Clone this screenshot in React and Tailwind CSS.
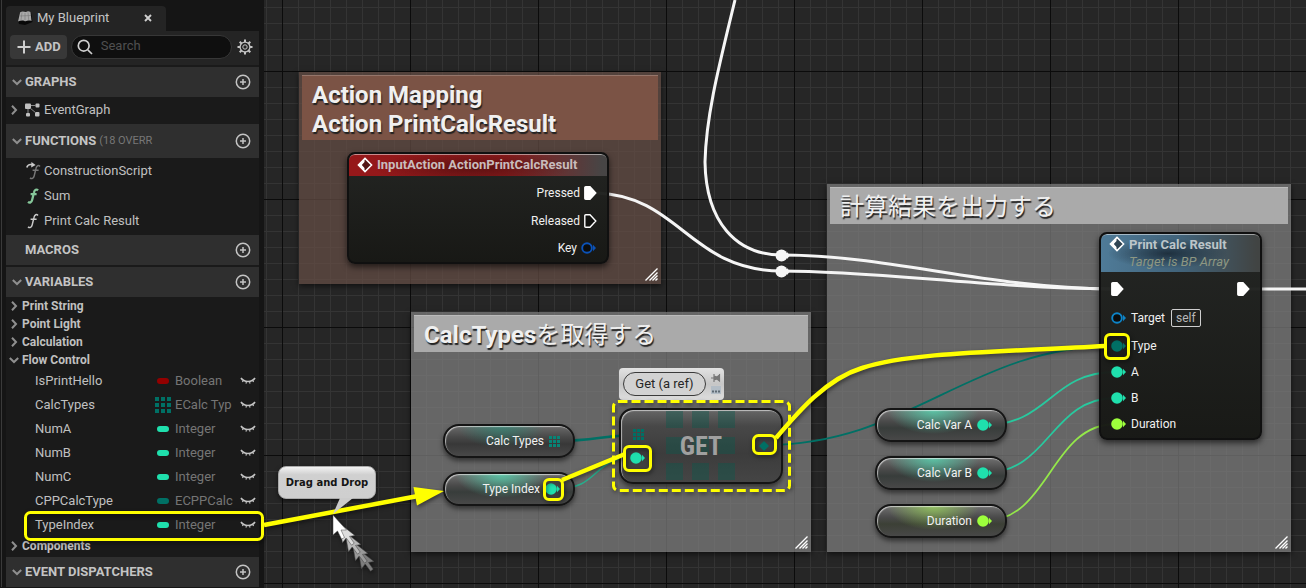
import React from "react";

const teal = "#007065";
const mint = "#1fe0ad";
const lime = "#9dff3c";

function Chevron({ open }) {
  return (
    <svg width="10" height="10" viewBox="0 0 10 10" fill="none" stroke="#8f8f8f" strokeWidth="2" aria-hidden="true">
      <path d={open ? "M0.8 3 L5 7 L9.2 3" : "M3 0.8 L7 5 L3 9.2"} />
    </svg>
  );
}

function PlusCircle() {
  return (
    <svg width="16" height="16" viewBox="0 0 16 16" fill="none" stroke="#c4c4c4" strokeWidth="1.5" aria-hidden="true">
      <circle cx="8" cy="8" r="6.7" />
      <path d="M8 5 V11 M5 8 H11" />
    </svg>
  );
}

function Section({ title, note, open, tall, noArrow }) {
  return (
    <div className={"flex items-center bg-[#2f2f2f] pr-2 pl-[6px] " + (tall ? "h-[34px]" : "h-[30px]")}>
      <button className="flex flex-1 items-center gap-[3px] text-left text-[13px] font-bold text-[#c4c4c4]">
        <span className="w-[10px]">{!noArrow && <Chevron open={open} />}</span>
        <span>{title}</span>
        {note && <span className="text-[11px] font-normal text-[#777]">{note}</span>}
      </button>
      <button aria-label={"Add to " + title}>
        <PlusCircle />
      </button>
    </div>
  );
}

function FIcon({ color, bold, override }) {
  return (
    <svg width="16" height="18" viewBox="0 0 16 18" fill="none" aria-hidden="true">
      <path
        d="M13 3.4 C11.6 1.9 9.6 2.6 9 5.4 L7.2 12.8 C6.6 15.6 4.6 16.1 3 14.8 M5.6 7.2 H11.6"
        transform={override ? "translate(1 1)" : "translate(-1 0)"}
        stroke={color}
        strokeWidth={bold ? 2.3 : 1.5}
      />
      {override && (
        <g>
          <path d="M0.8 5.4 C1.6 2.8 4 2.2 6 2.6" stroke="#c9c9c9" strokeWidth="1.6" />
          <path d="M5.4 0 L9.6 3 L5.2 5.4 Z" fill="#c9c9c9" />
        </g>
      )}
    </svg>
  );
}

function EyeClosed() {
  return (
    <svg width="16" height="8" viewBox="0 0 16 8" fill="none" stroke="#c4c4c4" aria-hidden="true">
      <path d="M1 1 C4 5.6 12 5.6 15 1" strokeWidth="1.6" />
      <path d="M3.4 3.4 L2.4 5 M6.4 4.6 L6 6.6 M9.6 4.6 L10 6.6 M12.6 3.4 L13.6 5" strokeWidth="1.1" />
    </svg>
  );
}

function GridIcon({ size, color }) {
  return (
    <svg width={size} height={size} viewBox="0 0 16 16" fill={color} aria-hidden="true">
      {[0, 6, 12].map((y) => [0, 6, 12].map((x) => <rect key={x + "-" + y} x={x} y={y} width="4" height="4" />))}
    </svg>
  );
}

function DenseGridIcon({ color }) {
  return (
    <svg width="11" height="11" viewBox="0 0 11 11" fill={color} aria-hidden="true">
      {[0, 4, 8].map((y) => [0, 4, 8].map((x) => <rect key={x + "-" + y} x={x} y={y} width="3" height="3" />))}
    </svg>
  );
}

function Category({ name, open }) {
  return (
    <button className="flex h-[18px] w-full items-center gap-[3px] pl-[3px] text-left text-xs font-bold text-[#c0c0c0]">
      <Chevron open={open} />
      {name}
    </button>
  );
}

function Variable({ name, type, color, array }) {
  return (
    <li className="flex h-6 items-center pl-[29px] text-[13px]">
      <span className="w-[120px] text-[#c0c0c0]">{name}</span>
      <span className="flex w-4 justify-center">
        {array ? (
          <GridIcon size={16} color={color} />
        ) : (
          <svg width="12" height="6" aria-hidden="true">
            <rect width="12" height="6" rx="3" fill={color} />
          </svg>
        )}
      </span>
      <span className="ml-1 w-[58px] overflow-hidden whitespace-nowrap text-[#757575]">{type}</span>
      <button className="ml-[7px]" aria-label={"Toggle visibility of " + name}>
        <EyeClosed />
      </button>
    </li>
  );
}

const variables = [
  ["IsPrintHello", "Boolean", "#930000"],
  ["CalcTypes", "ECalc Typ", teal, true],
  ["NumA", "Integer", mint],
  ["NumB", "Integer", mint],
  ["NumC", "Integer", mint],
  ["CPPCalcType", "ECPPCalc", teal],
  ["TypeIndex", "Integer", mint],
];

function Sidebar() {
  return (
    <aside className="w-[264px] shrink-0 bg-[#151515] pr-[5px]">
      <div className="ml-[1px] border-l border-[#3a3a3a] pl-1">
        <div className="flex h-[31px] items-end">
          <div className="flex h-[25px] w-40 items-center rounded-t bg-[#242424] pb-[2px] pl-[11px] text-[13px] text-[#c4c4c4]">
            <svg width="16" height="16" viewBox="0 0 16 16" aria-hidden="true">
              <path d="M1 11 L2.5 3 L14 2 L15.5 12 L8 15 L2 14 Z" fill="#080808" />
              <path d="M3 2.5 C6 0.5 8 2.6 9 2 C11 0.8 12 1.5 13.5 2 L14.5 11 C11 9.6 9 12 7.5 11 C5 10.2 3 10.8 1 11.6 Z" fill="#a9a9a9" />
              <path d="M5 2.5 L4 10 M8 3 V10.5 M11 2.5 L11.7 10 M2.5 6 L14 5.5" stroke="#777" strokeWidth="0.6" />
            </svg>
            <span className="ml-1 flex-1">My Blueprint</span>
            <button className="mr-[14px]" aria-label="Close tab">
              <svg width="8" height="8" viewBox="0 0 8 8" stroke="#cfcfcf" strokeWidth="1.9" aria-hidden="true">
                <path d="M1 1 L7 7 M7 1 L1 7" />
              </svg>
            </button>
          </div>
        </div>
        <div className="flex h-[34px] items-center bg-[#242424] pr-[6px] pb-[2px] pl-1">
          <button className="flex h-6 w-[57px] items-center gap-1 rounded bg-[#383838] pl-[7px] text-[13px] font-bold text-[#c4c4c4]">
            <svg width="14" height="14" viewBox="0 0 14 14" stroke="#cfcfcf" strokeWidth="2" aria-hidden="true">
              <path d="M7 0.5 V13.5 M0.5 7 H13.5" />
            </svg>
            ADD
          </button>
          <label className="ml-1 flex h-6 w-[162px] items-center rounded-full border border-[#373737] bg-[#0f0f0f] pl-[5px]">
            <svg width="16" height="16" viewBox="0 0 16 16" fill="none" stroke="#cfcfcf" strokeWidth="1.7" aria-hidden="true">
              <circle cx="6.7" cy="6.7" r="5.4" />
              <path d="M10.8 10.8 L15 15" />
            </svg>
            <input
              aria-label="Search"
              placeholder="Search"
              className="ml-2 w-[110px] bg-transparent pb-[2px] text-[13px] text-[#c0c0c0] outline-none placeholder:text-[#505050]"
            />
          </label>
          <button className="ml-[5px]" aria-label="Settings">
            <svg width="16" height="16" viewBox="0 0 16 16" fill="none" stroke="#c4c4c4" aria-hidden="true">
              <circle cx="8" cy="8" r="4.9" strokeWidth="1.3" />
              <circle cx="8" cy="8" r="2.2" strokeWidth="1" />
              <path
                d="M8 0.5 V3 M8 13 V15.5 M0.5 8 H3 M13 8 H15.5 M2.7 2.7 L4.5 4.5 M11.5 11.5 L13.3 13.3 M13.3 2.7 L11.5 4.5 M4.5 11.5 L2.7 13.3"
                strokeWidth="2"
              />
            </svg>
          </button>
        </div>
        <div className="flex flex-col gap-[2px] bg-[#1a1a1a] pt-[2px]">
          <div>
            <Section title="GRAPHS" open />
            <button className="flex h-[25px] w-full items-center pl-[3px] text-left text-[13px] text-[#c0c0c0]">
              <Chevron />
              <svg className="mr-1 ml-[6px]" width="15" height="14" viewBox="0 0 15 14" fill="#c0c0c0" aria-hidden="true">
                <rect x="0" y="0.5" width="6" height="5.5" rx="1" />
                <rect x="10.5" y="0.5" width="4" height="4" rx="1" />
                <rect x="1" y="10" width="4" height="3.5" rx="1" />
                <rect x="10" y="9" width="4.5" height="4.5" rx="1" />
                <path d="M6 2.5 H11 M3 6 V10 M5 5 L11 10" stroke="#8a8a8a" />
              </svg>
              EventGraph
            </button>
          </div>
          <div>
            <Section title="FUNCTIONS" note="(18 OVERR" open tall />
            <ul className="text-[13px] text-[#c0c0c0]">
              <li className="flex h-[25px] items-center gap-[2px] pl-5">
                <FIcon color="#777" override />
                ConstructionScript
              </li>
              <li className="flex h-[25px] items-center gap-[2px] pl-5">
                <FIcon color="#86c79a" bold />
                Sum
              </li>
              <li className="flex h-[25px] items-center gap-[2px] pl-5">
                <FIcon color="#c9c9c9" />
                Print Calc Result
              </li>
            </ul>
          </div>
          <Section title="MACROS" noArrow />
          <div>
            <Section title="VARIABLES" open />
            <Category name="Print String" />
            <Category name="Point Light" />
            <Category name="Calculation" />
            <Category name="Flow Control" open />
            <ul>
              {variables.map(([name, type, color, array]) => (
                <Variable key={name} name={name} type={type} color={color} array={array} />
              ))}
            </ul>
            <Category name="Components" />
          </div>
          <Section title="EVENT DISPATCHERS" open />
        </div>
      </div>
    </aside>
  );
}

function ResizeGrip() {
  return (
    <svg className="absolute right-[3px] bottom-[3px]" width="13" height="13" viewBox="0 0 13 13" stroke="#fff" strokeWidth="1.4" aria-hidden="true">
      <path d="M0.5 12.5 L12.5 0.5 M4.5 12.5 L12.5 4.5 M7.5 12.5 L12.5 7.5 M10.5 12.5 L12.5 10.5" />
    </svg>
  );
}

function Comment({ place, tone, headTone, children }) {
  return (
    <section className={"absolute p-[3px] shadow-[0_2px_6px_rgba(0,0,0,0.6)] " + place + " " + tone}>
      <h2
        className={
          "border-t border-white/20 pl-[10px] text-2xl leading-[29px] font-bold text-[#f0f0f0] [text-shadow:1px_2px_1px_#222] " +
          headTone
        }
      >
        {children}
      </h2>
      <ResizeGrip />
    </section>
  );
}

function Pin({ color, hollow }) {
  return (
    <svg width="16" height="12" viewBox="0 0 16 12" aria-hidden="true">
      <circle cx="6" cy="6" r={hollow ? 4.8 : 5.8} fill={hollow ? "#0c0d0d" : color} stroke={color} strokeWidth={hollow ? 1.9 : 0} />
      <path d="M12 2.8 L15 6 L12 9.2 Z" fill={color} />
    </svg>
  );
}

function ExecPin({ hollow }) {
  return (
    <svg width="13" height="14" viewBox="0 0 13 14" aria-hidden="true">
      <path
        d="M1.8 0.8 H6 L11.8 7 L6 13.2 H1.8 Q0.8 13.2 0.8 12.2 V1.8 Q0.8 0.8 1.8 0.8 Z"
        fill={hollow ? "#10110f" : "#fff"}
        stroke="#fff"
        strokeWidth="1.4"
      />
    </svg>
  );
}

function EventDiamond() {
  return (
    <svg width="16" height="16" viewBox="0 0 16 16" aria-hidden="true">
      <path d="M8 1.4 L14.6 8 L8 14.6 L1.4 8 Z" fill="rgba(20,20,20,0.5)" stroke="#fff" strokeWidth="1.5" />
      <path d="M7.5 2 L1.4 8 L7.5 14 V11 L4.8 8 L7.5 5 Z" fill="#fff" />
    </svg>
  );
}

function Pill({ place, glow, label, children }) {
  return (
    <div
      className={
        "absolute flex h-[34px] w-[132px] items-center justify-end gap-[5px] rounded-[16px] border-2 border-[#151515] pr-3 text-xs text-[#f2f2f2] shadow-[0_3px_5px_rgba(0,0,0,0.5),inset_1px_1px_1px_rgba(255,255,255,0.6)] " +
        glow +
        " " +
        place
      }
    >
      <span>{label}</span>
      {children}
    </div>
  );
}

const tealGlow =
  "bg-[radial-gradient(ellipse_44px_22px_at_44%_0%,rgba(30,150,125,0.55),transparent),linear-gradient(#6a6a6a_0%,#474747_38%,#383838_60%,#484848_100%)]";
const mintGlow =
  "bg-[radial-gradient(ellipse_46px_24px_at_44%_0%,rgba(85,225,185,0.75),transparent),linear-gradient(#707070_0%,#4a4a4a_38%,#383d3b_60%,#484848_100%)]";
const limeGlow =
  "bg-[radial-gradient(ellipse_46px_24px_at_44%_0%,rgba(160,225,90,0.7),transparent),linear-gradient(#707070_0%,#4a4a4a_38%,#3c4036_60%,#484848_100%)]";

function Wires() {
  return (
    <svg className="absolute inset-0 h-full w-full" fill="none" aria-hidden="true">
      <g transform="translate(-264 0)">
        <g stroke="#f5f5f5" strokeWidth="3">
          <path d="M735 0 C720 62 706 115 705 162 C706 222 736 255 782 255" />
          <path d="M597 193 C680 196 690 271 782 271" />
          <path d="M782 255 C890 255 985 288 1112 289" />
          <path d="M782 271 C880 271 985 288 1112 289" />
          <path d="M1244 289 H2600" />
        </g>
        <g fill="#f5f5f5">
          <circle cx="781.5" cy="255.5" r="6" />
          <circle cx="781.5" cy="271.5" r="6" />
          <path d="M787 252 L790 255.5 L787 259 Z M787 268 L790 271.5 L787 275 Z" />
        </g>
        <path d="M560 441 C590 441 610 435 636 435" stroke={teal} strokeWidth="2.5" />
        <path d="M555 489 C602 489 590 457 637 457" stroke="#27ad8c" strokeWidth="1.6" />
        <path d="M765 445 C910 445 970 346 1116 346" stroke={teal} strokeWidth="1.8" />
        <path d="M984 425 C1050 425 1050 372 1116 372" stroke="#28c99f" strokeWidth="1.8" />
        <path d="M984 473 C1050 473 1050 398 1116 398" stroke="#28c99f" strokeWidth="1.8" />
        <path d="M984 521 C1050 521 1050 424 1116 424" stroke="#94e84a" strokeWidth="1.8" />
      </g>
    </svg>
  );
}

const nodeFrame =
  "absolute overflow-hidden rounded-lg border-2 border-[#101010] bg-[linear-gradient(rgba(34,36,34,0.97),rgba(22,23,20,0.97))] text-xs text-[#f0f0f0] shadow-[0_3px_6px_rgba(0,0,0,0.6)]";

function InputActionNode() {
  return (
    <article className={nodeFrame + " top-[152px] left-[83px] h-[112px] w-[262px]"}>
      <h3 className="flex h-[22px] items-center gap-1 rounded-t-md border-t border-white/50 bg-[radial-gradient(ellipse_100px_16px_at_48%_60%,rgba(50,10,10,0.55),transparent),linear-gradient(90deg,#96181a_0%,#8c1a1b_60%,#474545_98%)] pb-[1px] pl-2 text-[13px] font-bold text-[#c9bcbc]">
        <EventDiamond />
        InputAction ActionPrintCalcResult
      </h3>
      <div className="flex flex-col pt-[3px] pr-[10px]">
        <div className="flex h-7 items-center justify-end gap-1">
          Pressed <ExecPin />
        </div>
        <div className="flex h-7 items-center justify-end gap-1">
          Released <ExecPin hollow />
        </div>
        <div className="flex h-[26px] items-center justify-end gap-1">
          Key <Pin color="#0b52b8" hollow />
        </div>
      </div>
    </article>
  );
}

function PrintNode() {
  return (
    <article className={nodeFrame + " top-[232px] left-[835px] h-[208px] w-[163px]"}>
      <header className="flex h-[38px] gap-1 rounded-t-md border-t border-white/50 bg-[radial-gradient(ellipse_60px_15px_at_42%_50%,rgba(15,25,35,0.7),transparent),linear-gradient(90deg,#4f7b98_0%,#41637a_50%,#414443_98%)] pt-[1px] pl-2">
        <EventDiamond />
        <div>
          <h3 className="text-[13px] leading-[17px] font-bold text-[#bcc5c9]">Print Calc Result</h3>
          <p className="text-[13px] leading-[17px] text-[#8d9782] italic">Target is BP Array</p>
        </div>
      </header>
      <div className="px-[10px] pt-[3px]">
        <div className="flex h-7 items-center justify-between">
          <ExecPin />
          <ExecPin />
        </div>
        <div className="flex h-[30px] items-center gap-1">
          <Pin color="#0d84c8" hollow /> Target
          <span className="ml-[2px] rounded-xs border border-[#cfcfcf] px-1 leading-4 text-[#b8b8b8]">self</span>
        </div>
        <div className="flex h-[26px] items-center gap-1">
          <Pin color={teal} /> Type
        </div>
        <div className="flex h-[26px] items-center gap-1">
          <Pin color={mint} /> A
        </div>
        <div className="flex h-[26px] items-center gap-1">
          <Pin color={mint} /> B
        </div>
        <div className="flex h-[26px] items-center gap-1">
          <Pin color={lime} /> Duration
        </div>
      </div>
    </article>
  );
}

function GetNode() {
  return (
    <article className="absolute top-[408px] left-[355px] grid h-[76px] w-[164px] grid-cols-[34px_1fr_34px] items-center overflow-hidden rounded-[14px] border-2 border-[#151515] bg-[linear-gradient(#666_0%,#484848_22%,#3c3c3c_60%,#454545_100%)] shadow-[0_3px_5px_rgba(0,0,0,0.5),inset_1px_1px_1px_rgba(255,255,255,0.6)]">
      <div className="flex flex-col items-center gap-3">
        <DenseGridIcon color={teal} />
        <Pin color={mint} />
      </div>
      <div className="grid place-items-center">
        <svg className="col-start-1 row-start-1" width="70" height="70" viewBox="0 0 70 70" fill="rgba(10,90,78,0.4)" aria-hidden="true">
          {[0, 26, 52].map((y) => [0, 26, 52].map((x) => <rect key={x + "-" + y} x={x} y={y} width="17" height="17" />))}
        </svg>
        <h3 className="col-start-1 row-start-1 font-['Roboto_Condensed',Roboto,sans-serif] text-[26px] leading-none font-bold text-[#a0a0a0]">
          GET
        </h3>
      </div>
      <svg className="justify-self-center" width="10" height="10" viewBox="0 0 10 10" fill={teal} aria-hidden="true">
        <path d="M0 5 L5 0 L10 5 L5 10 Z" />
      </svg>
    </article>
  );
}

function GetBubble() {
  return (
    <div className="absolute top-[368px] left-[355px] flex h-8 w-[105px] items-center gap-[5px] rounded-sm bg-[linear-gradient(#e2e2e2,#c6c6c6_50%,#dedede)] pl-1">
      <button className="h-6 w-[83px] rounded-full border border-[#3a3a3a] bg-[#d2d2d2] text-[13px] text-[#262626]">Get (a ref)</button>
      <svg width="10" height="22" viewBox="0 0 10 22" aria-hidden="true">
        <path d="M0 5 H3 M3 1 V9 M8.5 1 V9 M3 3 L6 4 L8.5 2 V8 L6 6 L3 7 Z" stroke="#777" strokeWidth="1.2" fill="#777" />
        <rect x="0" y="13" width="10" height="8" fill="#b3bdc6" />
        <path d="M1 18.5 H9" stroke="#5e6a74" strokeWidth="2" strokeDasharray="2 1" />
      </svg>
    </div>
  );
}

function Canvas() {
  return (
    <main className="relative flex-1 overflow-hidden bg-[#262626] bg-[linear-gradient(90deg,#0b0b0b_1px,transparent_1px),linear-gradient(#0b0b0b_1px,transparent_1px),linear-gradient(90deg,#343434_1px,transparent_1px),linear-gradient(#343434_1px,transparent_1px)] bg-[size:128px_128px,128px_128px,16px_16px,16px_16px] bg-[position:18px_0px,0px_71px,2px_0px,0px_7px]">
      <Comment place="top-[72px] left-[35px] h-[212px] w-[362px]" tone="bg-[rgba(101,78,69,0.72)]" headTone="h-[65px] bg-[#7b5345] pt-[5px]">
        Action Mapping
        <br />
        Action PrintCalcResult
      </Comment>
      <Comment place="top-[312px] left-[147px] h-[240px] w-[400px]" tone="bg-[rgba(128,128,128,0.72)]" headTone="h-[37px] bg-[#aaa] pt-[2px]">
        CalcTypes<span className="font-['Noto_Sans_CJK_JP',sans-serif] font-normal">を取得する</span>
      </Comment>
      <Comment place="top-[184px] left-[563px] h-[368px] w-[464px]" tone="bg-[rgba(128,128,128,0.72)]" headTone="h-[37px] bg-[#aaa] pt-[2px]">
        <span className="font-['Noto_Sans_CJK_JP',sans-serif] font-normal">計算結果を出力する</span>
      </Comment>
      <Wires />
      <InputActionNode />
      <PrintNode />
      <Pill place="top-[424px] left-[179px]" glow={tealGlow} label="Calc Types">
        <span className="flex w-3">
          <DenseGridIcon color="#078577" />
        </span>
      </Pill>
      <Pill place="top-[472px] left-[179px]" glow={mintGlow} label="Type Index">
        <Pin color={mint} />
      </Pill>
      <GetBubble />
      <GetNode />
      <Pill place="top-[408px] left-[611px]" glow={mintGlow} label="Calc Var A">
        <Pin color={mint} />
      </Pill>
      <Pill place="top-[456px] left-[611px]" glow={mintGlow} label="Calc Var B">
        <Pin color={mint} />
      </Pill>
      <Pill place="top-[504px] left-[611px]" glow={limeGlow} label="Duration">
        <Pin color={lime} />
      </Pill>
    </main>
  );
}

const cursorPath = "M0 0 V20 L4.5 16 L8.5 24 L11.5 22.5 L8 15 H13.5 Z";

function Annotations() {
  return (
    <div className="pointer-events-none absolute inset-0">
      <svg className="absolute inset-0 h-full w-full [filter:drop-shadow(1px_2px_2px_rgba(0,0,0,0.5))]" fill="none" stroke="#ff0" aria-hidden="true">
        <rect x="25.5" y="512.5" width="237" height="27" rx="5" strokeWidth="3" />
        <path d="M264 525 L418 496" strokeWidth="4.5" />
        <path d="M413.5 487 L444 491 L417 505.5 Z" fill="#ff0" stroke="none" />
        <rect x="544.5" y="479.5" width="18" height="20" rx="4.5" strokeWidth="3" />
        <path d="M562 480 L625 454" strokeWidth="4.5" />
        <rect x="624.5" y="446.5" width="26" height="24" rx="4.5" strokeWidth="3" />
        <rect x="753.5" y="435.5" width="22" height="18" rx="5" strokeWidth="3" />
        <path d="M776 438 C798 412 826 379 862 368 C910 352 1000 352 1105 346" strokeWidth="4.5" />
        <rect x="1105.5" y="334.5" width="23" height="24" rx="4.5" strokeWidth="3" />
        <rect x="613.5" y="401.5" width="176" height="89" rx="5" strokeWidth="3" strokeDasharray="9 4" />
      </svg>
      <svg className="absolute inset-0 h-full w-full [filter:drop-shadow(1px_2px_2px_rgba(0,0,0,0.5))]" aria-hidden="true">
        {[
          [358, 549, "#7d7d7d"],
          [352, 541, "#999"],
          [345, 532, "#b8b8b8"],
          [339, 523, "#ddd"],
          [333, 515, "#fff"],
        ].map(([x, y, color]) => (
          <path
            key={x}
            transform={`translate(${x} ${y}) rotate(${x === 333 ? 0 : -10})`}
            d={cursorPath}
            fill={color}
            stroke="#444"
            strokeWidth="0.5"
          />
        ))}
      </svg>
      <div className="absolute top-[466px] left-[278px] flex h-[33px] w-[98px] items-center justify-center rounded-lg border border-[#aaa] bg-[linear-gradient(#f2f2f2,#d0d0d0_25%,#cfcfcf)] font-['DejaVu_Sans',sans-serif] text-[10px] font-bold whitespace-nowrap text-[#151515] shadow-[0_2px_4px_rgba(0,0,0,0.5)]">
        Drag and Drop
      </div>
      <svg className="absolute inset-0 h-full w-full" aria-hidden="true">
        <path d="M340 498 L333 514 L353 498 Z" fill="#cbcbcb" />
      </svg>
    </div>
  );
}

export default function App() {
  return (
    <div className="relative flex min-h-screen overflow-hidden bg-[#151515] font-['Roboto','Noto_Sans_CJK_JP',sans-serif]">
      <Sidebar />
      <Canvas />
      <Annotations />
    </div>
  );
}
